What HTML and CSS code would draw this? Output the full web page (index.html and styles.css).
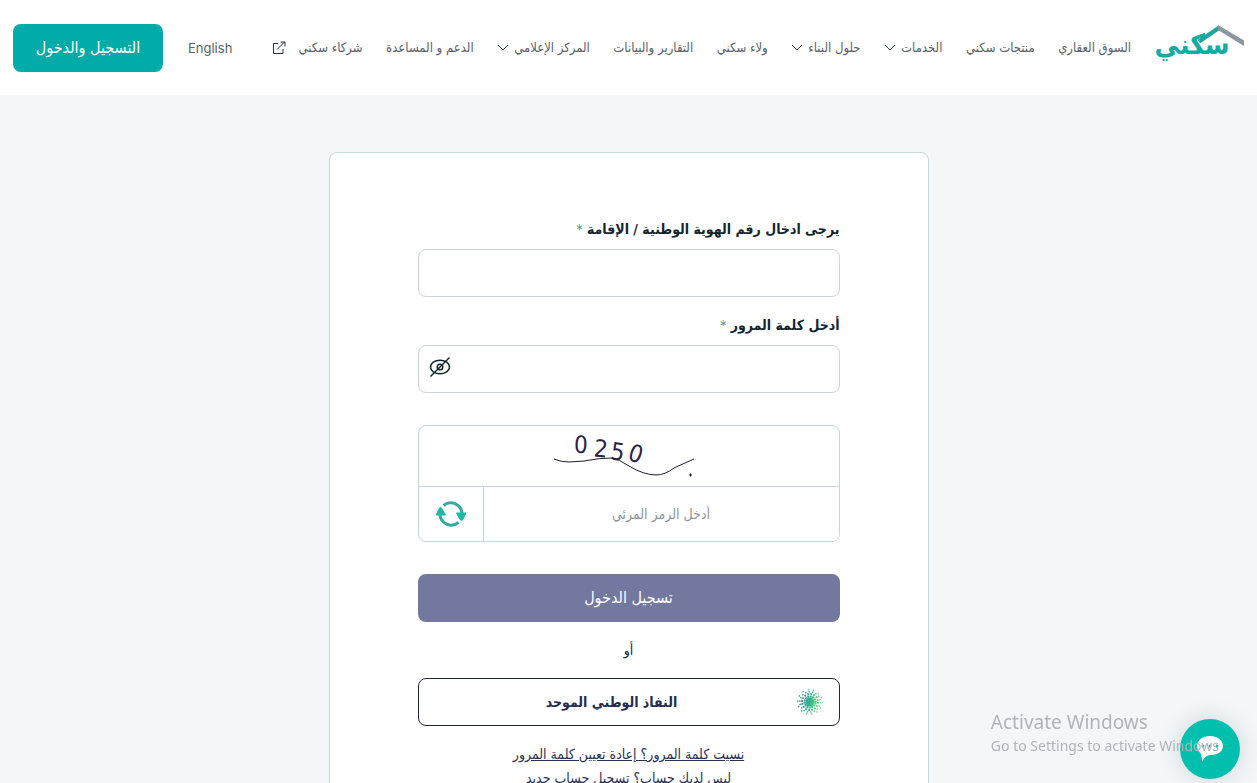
FILE: index.html
```html
<!DOCTYPE html>
<html lang="ar" dir="rtl">
<head>
  <meta charset="UTF-8" />
  <meta name="viewport" content="width=device-width, initial-scale=1.0" />
  <title>سكني</title>
  <link rel="stylesheet" href="styles.css">
</head>
<body>
  <div class="page">
    <header class="header">
      <a class="logo" href="#" aria-label="سكني">
        <svg width="89" height="48" viewBox="0 0 89 48">
          <path d="M44 17.500 L64.500 3.500" stroke="#1ea79d" stroke-width="4.500" fill="none"/>
          <path d="M63 1 L89 16.500 V22 L63 6z" fill="#8c989f"/>
          <text class="logo-text" x="37" y="30" text-anchor="middle">سكني</text>
        </svg>
      </a>
      <nav class="nav">
        <a href="#">السوق العقاري</a>
        <a href="#">منتجات سكني</a>
        <a href="#">الخدمات <svg class="chevron" viewBox="0 0 12 8"><path d="M1 1l5 5 5-5"/></svg></a>
        <a href="#">حلول البناء <svg class="chevron" viewBox="0 0 12 8"><path d="M1 1l5 5 5-5"/></svg></a>
        <a href="#">ولاء سكني</a>
        <a href="#">التقارير والبيانات</a>
        <a href="#">المركز الإعلامي <svg class="chevron" viewBox="0 0 12 8"><path d="M1 1l5 5 5-5"/></svg></a>
        <a href="#">الدعم و المساعدة</a>
        <a class="partners" href="#">شركاء سكني
          <svg class="external" viewBox="0 0 14 14"><path d="M6 2.500H1.500v10h9.500V8M5 8.500L12.500 1M8.500 1h4.500v4.500"/></svg>
        </a>
      </nav>
      <a class="lang" href="#" lang="en">English</a>
      <button class="btn-register" type="button">التسجيل والدخول</button>
    </header>

    <main class="main">
      <form class="card">
        <div class="field">
          <label for="national-id">يرجى ادخال رقم الهوية الوطنية / الإقامة <span class="required">*</span></label>
          <input class="input" type="text" id="national-id" />
        </div>
        <div class="field">
          <label for="password">أدخل كلمة المرور <span class="required">*</span></label>
          <div class="input-wrap">
            <input class="input" type="password" id="password" />
            <button class="toggle-password" type="button" aria-label="إظهار كلمة المرور">
              <svg width="22" height="22" viewBox="0 0 22 22"><ellipse cx="11" cy="11" rx="9.500" ry="6.800"/><circle cx="11" cy="11" r="2.800"/><path d="M1.500 20.500L20.500 1.500"/></svg>
            </button>
          </div>
        </div>

        <div class="captcha">
          <div class="captcha-image">
            <svg width="150" height="60" viewBox="0 0 150 60">
              <g class="captcha-digits">
                <text x="20" y="27" transform="rotate(2 26 18)">0</text>
                <text x="40" y="31" transform="rotate(6 47 23)">2</text>
                <text x="57" y="34" transform="rotate(8 64 25)">5</text>
                <text x="75" y="36" transform="rotate(18 82 28)">0</text>
              </g>
              <path d="M0 33 Q7 36 15 36 L30 35 Q45 32 57 32 Q65 33 75 40 Q90 49 102 49 Q111 49 120 42 L131 37 L140 33"/>
              <path d="M135 49h3M136.500 47.500v3"/>
            </svg>
          </div>
          <div class="captcha-row">
            <input class="captcha-input" type="text" placeholder="أدخل الرمز المرئي" aria-label="أدخل الرمز المرئي" />
            <button class="captcha-refresh" type="button" aria-label="تحديث">
              <svg width="30" height="26" viewBox="0 0 30 26">
                <path class="arc" d="M7.500 4.500A11.300 11.300 0 0 1 26 13M22.500 21.500A11.300 11.300 0 0 1 4 13"/>
                <path class="head" d="M20.500 12H30L26.500 19Q25.500 20.500 24.500 19zM0 14H9.500L5.500 7Q4.500 5.500 3.500 7z"/>
              </svg>
            </button>
          </div>
        </div>

        <button class="btn-login" type="submit">تسجيل الدخول</button>
        <p class="or">أو</p>
        <button class="btn-nafath" type="button">
          <svg class="nafath-icon" width="26" height="26" viewBox="0 0 26 26">
            <defs>
              <linearGradient id="nafath" gradientUnits="userSpaceOnUse" x1="2" y1="10" x2="24" y2="14">
                <stop offset="0" stop-color="#477f9b"/>
                <stop offset="0.5" stop-color="#2fb58c"/>
                <stop offset="1" stop-color="#7fe07f"/>
              </linearGradient>
            </defs>
            <circle cx="13" cy="13" r="4.500" fill="url(#nafath)"/>
            <g fill="none" stroke="url(#nafath)">
              <circle cx="13" cy="13" r="5.500" stroke-width="2" stroke-dasharray="2 0.500"/>
              <circle cx="13" cy="13" r="8" stroke-width="2" stroke-dasharray="1.800 1.340"/>
              <circle cx="13" cy="13" r="10.200" stroke-width="1.400" stroke-dasharray="1.400 2.160"/>
              <circle cx="13" cy="13" r="12.200" stroke-width="1.300" stroke-dasharray="1.300 4.170"/>
            </g>
          </svg>
          <span>النفاذ الوطني الموحد</span>
        </button>
        <div class="links">
          <a href="#">نسيت كلمة المرور؟ إعادة تعيين كلمة المرور</a>
          <a href="#">ليس لديك حساب؟ تسجيل حساب جديد</a>
        </div>
      </form>
    </main>
  </div>

  <button class="chat" type="button" aria-label="محادثة">
    <svg width="26" height="27" viewBox="0 0 26 27">
      <path d="M13 0C20 0 26 4 26 10S20 19 14 19C10 19 7 21 5.500 26C4.500 23 5 20 3.500 17C1 15 0 13 0 10C0 4 6 0 13 0z" fill="#fff"/>
      <g fill="#00bfae"><circle cx="6" cy="10" r="1.500"/><circle cx="13" cy="10" r="1.500"/><circle cx="20" cy="10" r="1.500"/></g>
    </svg>
  </button>
  <div class="watermark" dir="ltr" lang="en">
    <div class="watermark-title">Activate Windows</div>
    <div>Go to Settings to activate Windows</div>
  </div>
</body>
</html>
```

FILE: styles.css
```css
* { margin: 0; padding: 0; box-sizing: border-box; }
body {
  font-family: "DejaVu Sans Condensed", "DejaVu Sans", sans-serif;
  font-size: 14px;
  line-height: 24px;
  color: #14262d;
  background: #f3f7fa;
}
button, input { font: inherit; color: inherit; }
button { cursor: pointer; border: 0; background: none; }
a { color: inherit; text-decoration: none; }

.page {
  height: 100vh;
  overflow: hidden auto;
  scrollbar-width: none;
}

/* Header */
.header {
  display: flex;
  align-items: center;
  min-height: 95px;
  padding: 0 13px;
  background: #fff;
  white-space: nowrap;
}
.logo {
  display: flex;
  margin-inline-end: 24px;
}
.logo-text {
  font-size: 28px;
  font-weight: bold;
  fill: #14aca2;
}
.nav {
  flex: 1;
  display: flex;
  justify-content: space-between;
  font-size: 13px;
  color: #5c6167;
}
.nav a {
  display: flex;
  align-items: center;
  gap: 5px;
}
.nav .partners { gap: 12px; }
.chevron, .external {
  fill: none;
  stroke: #24343b;
}
.chevron { width: 12px; height: 8px; }
.external { width: 14px; height: 14px; }
.lang {
  margin: 0 40px 0 25px;
  font-family: Inter, sans-serif;
  font-size: 13px;
  color: #5c6167;
}
.btn-register {
  width: 150px;
  height: 48px;
  border-radius: 8px;
  background: #00aba8;
  font-size: 16px;
  color: #fff;
}

/* Login card */
.main {
  display: flex;
  justify-content: center;
  padding: 57px 16px;
}
.card {
  width: 100%;
  max-width: 600px;
  padding: 64px 88px;
  border: 1px solid #c6dade;
  border-radius: 8px;
  background: #fff;
}
.field { margin-bottom: 16px; }
.field label {
  display: block;
  margin-bottom: 8px;
  font-weight: bold;
}
.required {
  font-weight: normal;
  color: #2a9d9a;
}
.input {
  display: block;
  width: 100%;
  height: 48px;
  padding: 0 16px;
  border: 1px solid #ccd5d9;
  border-radius: 8px;
  background: #fff;
}
.input-wrap { position: relative; }
.toggle-password {
  position: absolute;
  left: 11px;
  top: 11px;
  display: flex;
}
.toggle-password svg {
  fill: none;
  stroke: #14262d;
  stroke-width: 1.5;
}

/* Captcha */
.captcha {
  margin: 32px 0;
  border: 1px solid #c6d5d9;
  border-radius: 8px;
  overflow: hidden;
}
.captcha-image {
  display: flex;
  justify-content: center;
  height: 60px;
}
.captcha-image path {
  fill: none;
  stroke: #221a35;
}
.captcha-digits {
  direction: ltr;
  font-size: 24px;
  fill: #2c2146;
}
.captcha-row {
  display: flex;
  height: 55px;
  border-top: 1px solid #c6d5d9;
}
.captcha-input {
  flex: 1;
  min-width: 0;
  border: 0;
  text-align: center;
}
.captcha-input::placeholder { color: #8b9499; }
.captcha-refresh {
  display: flex;
  align-items: center;
  justify-content: center;
  width: 65px;
  border-right: 1px solid #c6d5d9;
}
.captcha-refresh .arc {
  fill: none;
  stroke: #35ab9f;
  stroke-width: 3;
}
.captcha-refresh .head {
  fill: #1db8a8;
  stroke: #1db8a8;
  stroke-linejoin: round;
}

/* Actions */
.btn-login {
  display: block;
  width: 100%;
  height: 48px;
  border-radius: 8px;
  background: #73799e;
  font-size: 16px;
  color: #fff;
}
.or {
  margin: 16px 0;
  text-align: center;
}
.btn-nafath {
  display: flex;
  align-items: center;
  width: 100%;
  height: 48px;
  padding: 0 16px 0 8px;
  border: 1px solid #23263b;
  border-radius: 8px;
  font-weight: bold;
  color: #262b50;
}
.btn-nafath span { flex: 1; }
.links {
  display: flex;
  flex-direction: column;
  align-items: center;
  margin-top: 16px;
  color: #2b3252;
}
.links a { text-decoration: underline; }

/* Floating chat button */
.chat {
  position: fixed;
  right: 17px;
  bottom: 4px;
  display: flex;
  align-items: center;
  justify-content: center;
  width: 60px;
  height: 60px;
  border-radius: 50%;
  background: #00bfae;
  box-shadow: 0 0 24px rgba(0,0,0,0.15);
}
.watermark {
  position: fixed;
  right: 38px;
  bottom: 25px;
  font-family: "Noto Sans", sans-serif;
  font-size: 14px;
  color: #b0b4b8;
  pointer-events: none;
}
.watermark-title { font-size: 19px; }
```
